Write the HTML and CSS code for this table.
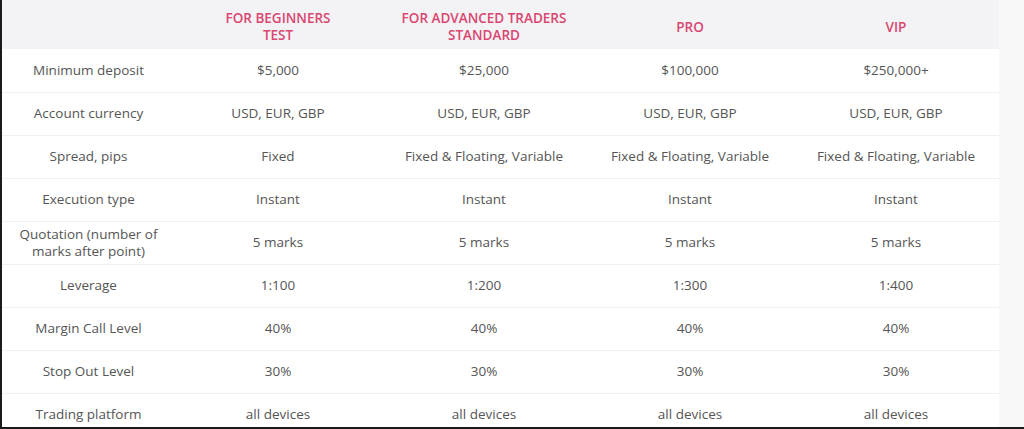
FILE: index.html
```html
<!DOCTYPE html>
<html>
<head>
<meta charset="utf-8">
<link rel="stylesheet" href="styles.css">
</head>
<body>
<div class="frame">
  <table class="plans">
    <thead>
      <tr>
        <th class="label"></th>
        <th>FOR BEGINNERS<br>TEST</th>
        <th>FOR ADVANCED TRADERS<br>STANDARD</th>
        <th>PRO</th>
        <th>VIP</th>
      </tr>
    </thead>
    <tbody>
      <tr><td class="label">Minimum deposit</td><td>$5,000</td><td>$25,000</td><td>$100,000</td><td>$250,000+</td></tr>
      <tr><td class="label">Account currency</td><td>USD, EUR, GBP</td><td>USD, EUR, GBP</td><td>USD, EUR, GBP</td><td>USD, EUR, GBP</td></tr>
      <tr><td class="label">Spread, pips</td><td>Fixed</td><td>Fixed &amp; Floating, Variable</td><td>Fixed &amp; Floating, Variable</td><td>Fixed &amp; Floating, Variable</td></tr>
      <tr><td class="label">Execution type</td><td>Instant</td><td>Instant</td><td>Instant</td><td>Instant</td></tr>
      <tr><td class="label">Quotation (number of marks after point)</td><td>5 marks</td><td>5 marks</td><td>5 marks</td><td>5 marks</td></tr>
      <tr><td class="label">Leverage</td><td>1:100</td><td>1:200</td><td>1:300</td><td>1:400</td></tr>
      <tr><td class="label">Margin Call Level</td><td>40%</td><td>40%</td><td>40%</td><td>40%</td></tr>
      <tr><td class="label">Stop Out Level</td><td>30%</td><td>30%</td><td>30%</td><td>30%</td></tr>
      <tr><td class="label">Trading platform</td><td>all devices</td><td>all devices</td><td>all devices</td><td>all devices</td></tr>
    </tbody>
  </table>
</div>
</body>
</html>
```

FILE: styles.css
```css
html, body {
  margin: 0;
  padding: 0;
  width: 1024px;
  height: 429px;
  overflow: hidden;
  background: #f8f8f9;
}
.frame {
  box-sizing: border-box;
  width: 1024px;
  height: 429px;
  border-left: 2px solid #1a1a1a;
  border-bottom: 2px solid #1a1a1a;
  overflow: hidden;
  background: #f8f8f9;
}
.plans {
  width: 997px;
  border-collapse: collapse;
  table-layout: fixed;
  font-family: "Open Sans", "Liberation Sans", sans-serif;
  font-size: 13.5px;
  color: #555;
}
.plans th {
  background: #f3f3f6;
  color: #d9466f;
  font-weight: 600;
  font-size: 13.5px;
  line-height: 17px;
  height: 49px;
  padding: 5px 4px 0;
  vertical-align: middle;
  text-align: center;
  width: 206px;
  box-sizing: border-box;
}
.plans th.label {
  width: 173px;
}
.plans td {
  background: #fff;
  height: 43px;
  padding: 0 4px;
  box-sizing: border-box;
  text-align: center;
  vertical-align: middle;
  border-top: 1px solid #f0f0f2;
  line-height: 17px;
}
.plans tbody tr:first-child td {
  border-top: none;
}
.plans td.label {
  padding: 0 6px;
}
```
